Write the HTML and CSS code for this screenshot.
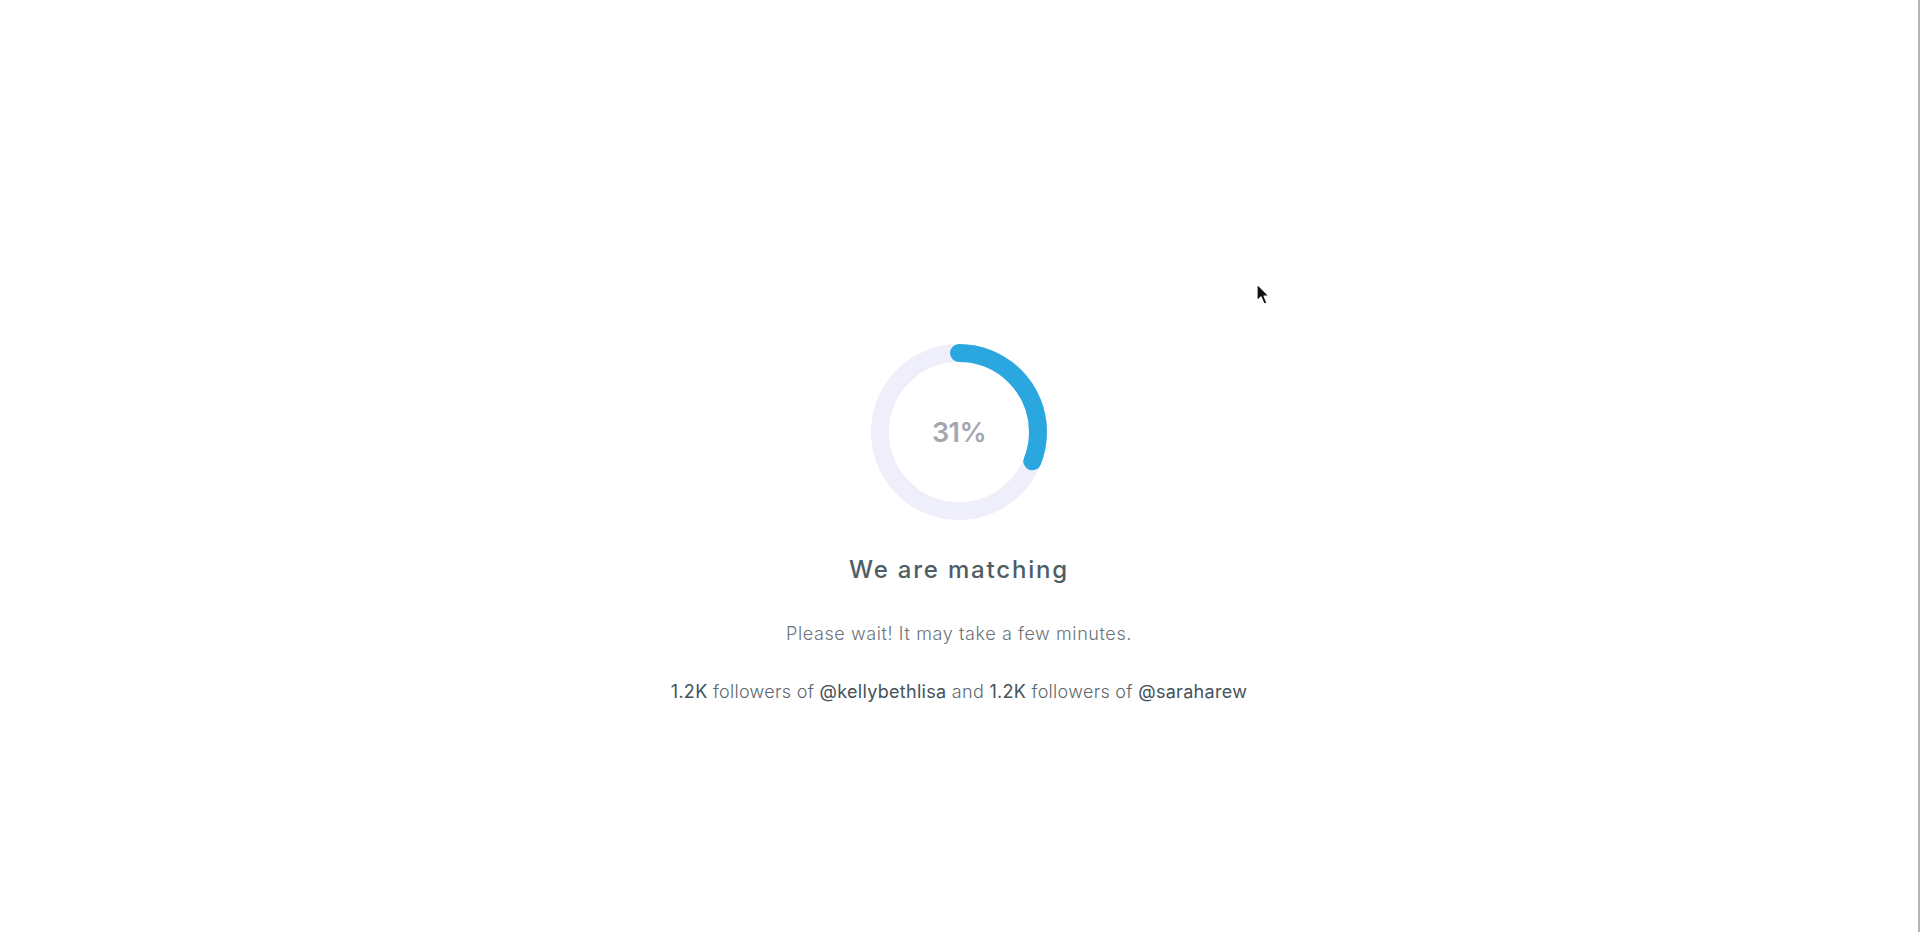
FILE: index.html
```html
<!DOCTYPE html>
<html lang="en">
<head>
<meta charset="utf-8">
<title>We are matching</title>
<link rel="stylesheet" href="styles.css">
</head>
<body>
<div class="page">
  <main class="matching">
    <div class="progress">
      <svg class="ring" width="176" height="176" viewBox="0 0 176 176">
        <circle cx="88" cy="88" r="79" fill="none" stroke="#efeefb" stroke-width="18"/>
        <circle cx="88" cy="88" r="79" fill="none" stroke="#2ba7df" stroke-width="18" stroke-linecap="round"
          stroke-dasharray="153.9 496.4" transform="rotate(-90 88 88)"/>
      </svg>
      <span class="percent">31%</span>
    </div>
    <h1 class="title">We are matching</h1>
    <p class="subtitle">Please wait! It may take a few minutes.</p>
    <p class="details"><b>1.2K</b> followers of <b>@kellybethlisa</b> and <b>1.2K</b> followers of <b>@saraharew</b></p>
  </main>
  <svg class="cursor" width="16" height="24" viewBox="0 0 16 24">
    <path d="M1 1 L1 18 L5 14 L8 21 L11 20 L8 13 L13 13 Z" fill="#111" stroke="#fff" stroke-width="1.2" stroke-linejoin="round"/>
  </svg>
</div>
</body>
</html>
```
FILE: styles.css
```css
html, body {
  margin: 0;
  padding: 0;
  background: #ffffff;
}
body {
  font-family: "Inter", "Open Sans", sans-serif;
}
.page {
  position: relative;
  height: 932px;
  box-sizing: border-box;
  border-right: 2px solid #b4b4b4;
  display: flex;
  justify-content: center;
}
.matching {
  display: flex;
  flex-direction: column;
  align-items: center;
  padding-top: 344px;
}
.progress {
  position: relative;
  width: 176px;
  height: 176px;
}
.ring {
  display: block;
}
.percent {
  position: absolute;
  inset: 0;
  display: flex;
  align-items: center;
  justify-content: center;
  font-size: 27px;
  font-weight: 600;
  color: #a4a7b1;
  letter-spacing: -0.5px;
}
.title {
  margin: 33px 0 0;
  font-size: 24px;
  line-height: 34px;
  font-weight: 500;
  color: #4f5d65;
  letter-spacing: 1.8px;
}
.subtitle {
  margin: 34px 0 0;
  font-size: 18px;
  line-height: 26px;
  font-weight: 300;
  color: #6b7479;
  letter-spacing: 0.6px;
}
.details {
  margin: 32px 0 0;
  font-size: 18px;
  line-height: 26px;
  font-weight: 300;
  color: #5d686e;
  letter-spacing: 0.3px;
}
.details b {
  font-weight: 400;
  color: #44525a;
}
.cursor {
  position: absolute;
  left: 1256px;
  top: 283px;
}
```
